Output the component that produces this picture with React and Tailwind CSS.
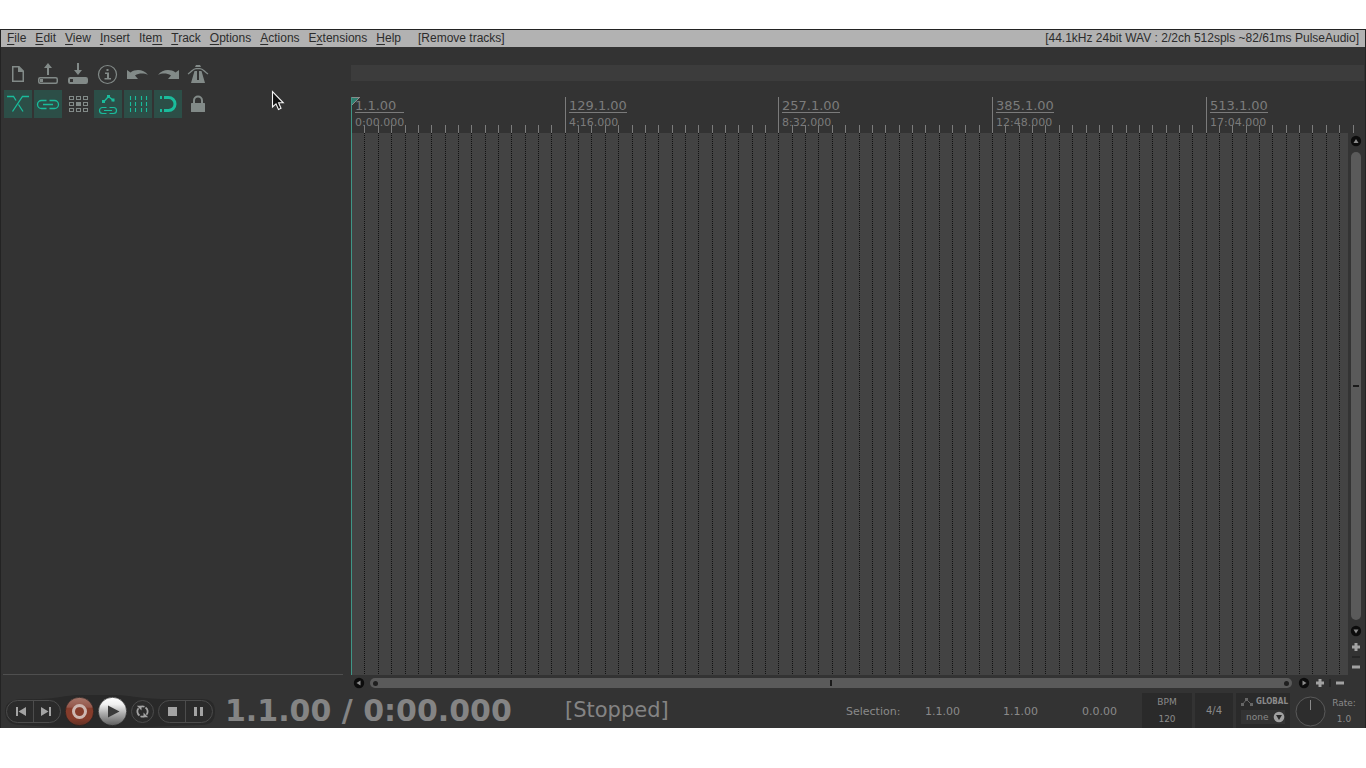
import React from "react";

const BEAT = 13.352;
const beatX = (i) => Math.round(i * BEAT + 0.14);
const ticks = Array.from({ length: 200 }, (_, i) => beatX(i) + 0.5);
const gridPath = ticks.slice(1).map((x) => `M${x} 0V2000`).join("");
const minorPath = ticks.filter((_, i) => i % 16 !== 0).map((x) => `M${x} 28V36`).join("");

const markers = [
  { bar: "1.1.00", time: "0:00.000", beat: 0 },
  { bar: "129.1.00", time: "4:16.000", beat: 16 },
  { bar: "257.1.00", time: "8:32.000", beat: 32 },
  { bar: "385.1.00", time: "12:48.000", beat: 48 },
  { bar: "513.1.00", time: "17:04.000", beat: 64 },
];

const menus = [
  ["", "F", "ile"],
  ["", "E", "dit"],
  ["", "V", "iew"],
  ["", "I", "nsert"],
  ["Ite", "m", ""],
  ["", "T", "rack"],
  ["", "O", "ptions"],
  ["", "A", "ctions"],
  ["E", "x", "tensions"],
  ["", "H", "elp"],
];

const Drive = ({ filled }) => (
  <>
    <rect x="4.75" y="17.75" width="18.5" height="5.5" rx="1.5" fill={filled ? "currentColor" : "none"} stroke="currentColor" strokeWidth="1.5" />
    <rect x="6" y="19" width="3" height="3" fill={filled ? "#333333" : "currentColor"} />
  </>
);

const topTools = [
  {
    name: "New project",
    art: (
      <>
        <path d="M8.75 6.75H15L19.25 11V21.25H8.75Z" fill="none" stroke="currentColor" strokeWidth="1.5" />
        <path d="M14 6V12H20L14 6Z" fill="currentColor" />
      </>
    ),
  },
  {
    name: "Open project",
    art: (
      <>
        <path d="M14 3L18 8H15V15H13V8H10Z" fill="currentColor" />
        <Drive />
      </>
    ),
  },
  {
    name: "Save project",
    art: (
      <>
        <path d="M13 3H15V10H18L14 15L10 10H13Z" fill="currentColor" />
        <Drive filled />
      </>
    ),
  },
  {
    name: "Project settings",
    art: (
      <>
        <circle cx="13.5" cy="14.5" r="9" fill="none" stroke="currentColor" strokeWidth="1.2" />
        <path d="M12.5 9H14.5V11H12.5ZM11 12.5H15V18H17V19.5H10.5V18H13V14H11Z" fill="currentColor" />
      </>
    ),
  },
  {
    name: "Undo",
    art: <path d="M3 10L6.5 12.5C12 8.5 20 9.5 24 15C20 13 15 13 11 15.5L14 19H3Z" fill="currentColor" />,
  },
  {
    name: "Redo",
    art: <path d="M25 10L21.5 12.5C16 8.5 8 9.5 4 15C8 13 13 13 17 15.5L14 19H25Z" fill="currentColor" />,
  },
  {
    name: "Metronome",
    art: (
      <>
        <path d="M12 5H16L17 7H11Z" fill="currentColor" />
        <path d="M4 14C8 11.5 9 8.7 12 8.7H16C19 8.7 20 11.5 24 14" fill="none" stroke="currentColor" strokeWidth="1.3" />
        <path d="M10.5 11H13V20H15V11H17.5L21 23H7Z" fill="currentColor" />
      </>
    ),
  },
];

const bottomTools = [
  {
    name: "Auto-crossfade",
    on: true,
    art: <path d="M3 6.5H9.5L12 10.5M14.5 14.5L19 21.5M25 6.5H18.5L8.5 21.5" fill="none" stroke="currentColor" strokeWidth="1.3" />,
  },
  {
    name: "Item grouping",
    on: true,
    art: <path d="M12.5 10.5H7.5A4 4 0 0 0 7.5 18.5H12.5M15.5 10.5H20.5A4 4 0 0 1 20.5 18.5H15.5M9 14.5H19" fill="none" stroke="currentColor" strokeWidth="1.3" />,
  },
  {
    name: "Ripple editing",
    art: (
      <>
        {[0, 1, 2].map((r) =>
          [0, 1, 2].map((c) => (
            <rect
              key={`${r}${c}`}
              x={5.5 + c * 7}
              y={6.5 + r * 6}
              width="4"
              height="3"
              fill={r === 1 && c === 1 ? "currentColor" : "none"}
              stroke="currentColor"
            />
          ))
        )}
      </>
    ),
  },
  {
    name: "Move envelopes with items",
    on: true,
    art: (
      <>
        <path d="M10 11.5L14.5 6.5L20 11" fill="none" stroke="currentColor" strokeWidth="1.3" />
        <path d="M8 10H11V13H8ZM13 5H16V8H13ZM17.5 8.5H20.5V11.5H17.5Z" fill="currentColor" />
        <path d="M12.5 17.5H8.5A3 3 0 0 0 8.5 23.5H12.5M15.5 17.5H19.5A3 3 0 0 1 19.5 23.5H15.5M10 20.5H18" fill="none" stroke="currentColor" strokeWidth="1.2" />
      </>
    ),
  },
  {
    name: "Grid lines",
    on: true,
    art: <path d="M6.5 6V22M11.5 6V22M17.5 6V22M22.5 6V22" fill="none" stroke="currentColor" strokeWidth="1.1" strokeDasharray="4 2" />,
  },
  {
    name: "Snapping",
    on: true,
    art: (
      <>
        <path d="M6 6H8V9H6ZM6 19H8V22H6Z" fill="currentColor" />
        <path d="M10 7.5H14.5A6.5 6.5 0 0 1 14.5 20.5H10" fill="none" stroke="currentColor" strokeWidth="3" />
      </>
    ),
  },
  {
    name: "Locking",
    art: (
      <>
        <rect x="7" y="13" width="14" height="9" rx="0.5" fill="currentColor" />
        <path d="M10 13.5V10.5A4 4 0 0 1 18 10.5V13.5" fill="none" stroke="currentColor" strokeWidth="2" />
      </>
    ),
  },
];

function ToolRow({ tools }) {
  return (
    <div className="flex gap-[2px]">
      {tools.map((t) => (
        <button
          key={t.name}
          aria-label={t.name}
          aria-pressed={t.on ? true : undefined}
          className={t.on ? "size-7 bg-[#2c4e47] text-[#1abc9c]" : "size-7 text-[#828a88]"}
        >
          <svg viewBox="0 0 28 28" className="block size-7">{t.art}</svg>
        </button>
      ))}
    </div>
  );
}

const arrows = {
  up: "M8 6L10.5 10H5.5Z",
  down: "M8 10.5L10.5 6.5H5.5Z",
  left: "M5.5 8L9.5 5.5V10.5Z",
  right: "M10.5 8L6.5 5.5V10.5Z",
};

function ArrowButton({ dir }) {
  return (
    <button aria-label={`Scroll ${dir}`} className="size-4 shrink-0">
      <svg viewBox="0 0 16 16" className="block size-4">
        <circle cx="8" cy="8" r="5.2" fill="#0c0c0c" />
        <path d={arrows[dir]} fill="#8c8c8c" />
      </svg>
    </button>
  );
}

function ZoomButton({ label, plus }) {
  return (
    <button aria-label={label} className="size-4 shrink-0">
      <svg viewBox="0 0 16 16" className="block size-4">
        <path d={plus ? "M6.5 4H9.5V6.5H12V9.5H9.5V12H6.5V9.5H4V6.5H6.5Z" : "M4 6.5H12V9.5H4Z"} fill="#a2a2a2" />
      </svg>
    </button>
  );
}

function PillPair({ items, className }) {
  return (
    <div className={`flex h-[23px] w-[55px] shrink-0 overflow-hidden rounded-full border border-[#4c4c4c] bg-[#2b2b2b] ${className}`}>
      {items.map((it, i) => (
        <button key={it.name} aria-label={it.name} className={i === 0 ? "w-[27px] shrink-0 border-r border-[#4c4c4c]" : "w-[26px] shrink-0"}>
          <svg viewBox="0 0 26 21" className="block h-[21px] w-[26px]" fill="#a3a3a3">
            <path d={it.d} />
          </svg>
        </button>
      ))}
    </div>
  );
}

const field = "bg-transparent p-0 outline-none";

function Transport() {
  return (
    <div className="flex h-[37px] shrink-0 items-center pt-1 font-['DejaVu_Sans',sans-serif] text-[#8a8a8a]">
      <div className="relative flex shrink-0 items-center pl-[5px]">
        <svg viewBox="0 0 214 33" className="absolute left-0 top-[-2px] h-[33px] w-[214px]">
          <path d="M4 16C4 7 12 4 24 4C55 5 62 0 79 0H112C128 0 135 3 160 4H200C210 4 214 8 214 16C214 26 210 30 200 30C160 31 130 33 96 33C62 33 40 31 20 30C10 30 4 26 4 16Z" fill="#292929" />
        </svg>
        <PillPair
          className="relative"
          items={[
            { name: "Go to start", d: "M9 6H11V15H9ZM19 6V15L11.5 10.5Z" },
            { name: "Go to end", d: "M15 6H17V15H15ZM7 6V15L14.5 10.5Z" },
          ]}
        />
        <button aria-label="Record" className="relative ml-1 size-[29px] shrink-0">
          <svg viewBox="0 0 29 29" className="block size-[29px]">
            <defs>
              <linearGradient id="rec" x1="0" y1="0" x2="0" y2="1">
                <stop offset="0" stopColor="#a5766a" />
                <stop offset="0.35" stopColor="#94564a" />
                <stop offset="0.38" stopColor="#853c2b" />
                <stop offset="0.75" stopColor="#853c2b" />
                <stop offset="1" stopColor="#5f3025" />
              </linearGradient>
            </defs>
            <circle cx="14.5" cy="14.5" r="14.2" fill="url(#rec)" stroke="#1c1c1c" strokeWidth="0.6" />
            <circle cx="14.5" cy="14.5" r="6" fill="none" stroke="#cdb7b1" strokeWidth="3" />
          </svg>
        </button>
        <button aria-label="Play" className="relative ml-1 size-[29px] shrink-0">
          <svg viewBox="0 0 29 29" className="block size-[29px]">
            <defs>
              <linearGradient id="play" x1="0" y1="0" x2="0" y2="1">
                <stop offset="0" stopColor="#ffffff" />
                <stop offset="0.25" stopColor="#f0f0f0" />
                <stop offset="0.55" stopColor="#b0b0b0" />
                <stop offset="1" stopColor="#5c5c5c" />
              </linearGradient>
            </defs>
            <circle cx="14.5" cy="14.5" r="14.2" fill="url(#play)" stroke="#1c1c1c" strokeWidth="0.6" />
            <path d="M10 8.5V20.5L21.5 14.5Z" fill="#3a3a3a" />
          </svg>
        </button>
        <button aria-label="Repeat" className="relative ml-1 size-[23px] shrink-0">
          <svg viewBox="0 0 23 23" className="block size-[23px]">
            <circle cx="11.5" cy="11.5" r="11" fill="#2b2b2b" stroke="#4c4c4c" />
            <path d="M8.5 15.6A5 5 0 0 1 7.5 8.3M14.5 7.4A5 5 0 0 1 15.5 14.7M9.5 6.8A5 5 0 0 1 13.5 6.8M9.5 16.2A5 5 0 0 0 13.5 16.2" fill="none" stroke="#a3a3a3" strokeWidth="1.8" />
            <path d="M5.8 5.8H10.5V10.5ZM17.2 17.2H12.5V12.5Z" fill="#a3a3a3" />
          </svg>
        </button>
        <PillPair
          className="relative ml-1"
          items={[
            { name: "Stop", d: "M9 6H18V15H9Z" },
            { name: "Pause", d: "M8 6H11V15H8ZM14 6H17V15H14Z" },
          ]}
        />
      </div>
      <div className="ml-3 w-[340px] shrink-0 whitespace-nowrap pb-[2px] text-[30px] font-bold leading-8 text-[#848484]">1.1.00 / 0:00.000</div>
      <div className="whitespace-nowrap pb-1 text-[21px] leading-8 text-[#848484]">[Stopped]</div>

      <div className="ml-auto flex shrink-0 items-center text-[11px] leading-4">
        <label htmlFor="sel-start" className="w-[79px]">Selection:</label>
        <input id="sel-start" defaultValue="1.1.00" className={`w-[78px] ${field}`} />
        <input aria-label="Selection end" defaultValue="1.1.00" className={`w-[79px] ${field}`} />
        <input aria-label="Selection length" defaultValue="0.0.00" className={`w-[60px] ${field}`} />
      </div>

      <div className="flex h-[35px] shrink-0 self-end text-[9px] leading-[18px]">
        <div className="flex w-[50px] flex-col bg-[#2a2a2a] text-center">
          <label htmlFor="bpm">BPM</label>
          <input id="bpm" defaultValue="120" className={`h-4 w-full text-center ${field}`} />
        </div>
        <button className="ml-[3px] w-[38px] bg-[#2a2a2a] text-[10px]">4/4</button>
        <div className="ml-[3px] w-[54px] bg-[#2a2a2a] pl-[5px]">
          <label htmlFor="global-auto" className="flex h-[17px] items-center gap-[3px] font-['DejaVu_Sans_Condensed','DejaVu_Sans',sans-serif] text-[8px] font-bold">
            <svg viewBox="0 0 12 10" className="h-[10px] w-3 shrink-0">
              <path d="M1.5 7.5L5.5 2.5L10.5 7.5" fill="none" stroke="#666666" />
              <path d="M0 6H3V9H0ZM4 1H7V4H4ZM9 6H12V9H9Z" fill="#666666" />
            </svg>
            GLOBAL
          </label>
          <div className="relative flex h-[14px] w-[44px] items-center bg-[#333333]">
            <select id="global-auto" className="h-[14px] w-full appearance-none bg-transparent pl-[5px] leading-[14px] outline-none">
              <option>none</option>
            </select>
            <svg viewBox="0 0 12 12" className="pointer-events-none absolute right-0 size-3">
              <circle cx="6" cy="6" r="5.3" fill="#a0a0a0" />
              <path d="M3 4H9L6 9Z" fill="#2a2a2a" />
            </svg>
          </div>
        </div>
        <div className="relative ml-[5px] mt-[3px] size-[31px]">
          <svg viewBox="0 0 31 31" className="block size-[31px]">
            <circle cx="15.5" cy="15.5" r="14.5" fill="#2d2d2d" stroke="#5a5a5a" />
            <path d="M15.5 4V14" stroke="#8a8a8a" strokeWidth="1" />
          </svg>
          <input type="range" aria-label="Playback rate" min="0.25" max="4" step="0.01" defaultValue="1" className="absolute inset-0 m-0 size-full opacity-0" />
        </div>
        <div className="ml-px w-[38px] pr-1 pt-[2px] text-center leading-4">
          <div>Rate:</div>
          <div>1.0</div>
        </div>
      </div>
    </div>
  );
}

export default function App() {
  return (
    <div className="flex h-screen flex-col bg-white pb-10 pt-[29px]">
      <div className="relative flex min-h-0 flex-1 flex-col overflow-hidden border border-b-0 border-[#232323] bg-[#333333]">
        <nav className="flex h-[17px] shrink-0 items-center gap-px bg-[#b2b2b2] pl-[2px] pr-1.5 font-['Liberation_Sans',sans-serif] text-[12px] leading-[17px] text-[#2c2c2c]">
          {menus.map(([a, u, b]) => (
            <button key={a + u + b} className="whitespace-nowrap px-1">
              {a}
              <span className="underline underline-offset-2">{u}</span>
              {b}
            </button>
          ))}
          <button className="ml-2 whitespace-nowrap px-1">[Remove tracks]</button>
          <span className="ml-auto whitespace-nowrap">[44.1kHz 24bit WAV : 2/2ch 512spls ~82/61ms PulseAudio]</span>
        </nav>

        <div className="flex min-h-0 flex-1">
          <aside className="flex w-[350px] shrink-0 flex-col">
            <div className="flex flex-col gap-[2px] pl-[3px] pt-[13px]">
              <ToolRow tools={topTools} />
              <ToolRow tools={bottomTools} />
            </div>
            <div className="mb-4 ml-[2px] mr-2 mt-auto h-px bg-[#4f4f4f]" />
          </aside>

          <main className="flex min-w-0 flex-1 flex-col">
            <div className="mr-px mt-[18px] h-4 shrink-0 bg-[#3c3c3c]" />
            <div className="relative mt-4 h-9 shrink-0 overflow-hidden font-['DejaVu_Sans',sans-serif] text-[#7b7b7b]">
              <svg className="absolute inset-0 size-full">
                <path d={minorPath} stroke="#7b7b7b" />
                <path d="M0 0.5H9" stroke="#8a8a8a" />
                <path d="M0 1H8L0 9Z" fill="#2f7f70" />
                <path d="M8.5 0.5L0.5 8.5" stroke="#8a8a8a" />
                <path d="M0.5 0V37" stroke="#3f9586" />
              </svg>
              {markers.map((m) => (
                <div
                  key={m.bar}
                  className={m.beat ? "absolute inset-y-0 border-l border-[#7b7b7b] pl-[3px]" : "absolute inset-y-0 pl-1"}
                  style={{ left: beatX(m.beat) }}
                >
                  <div className="flex h-4 items-end border-b border-[#7b7b7b] text-[13px] leading-[13px]">{m.bar}</div>
                  <div className="text-[11px] leading-5">{m.time}</div>
                </div>
              ))}
            </div>

            <div className="flex min-h-0 flex-1">
              <div className="relative min-w-0 flex-1 overflow-hidden border-l border-[#3f9586] bg-[#434343]">
                <svg className="absolute inset-y-0 -left-px h-full w-full">
                  <path d={gridPath} stroke="#111111" strokeDasharray="1 1" />
                </svg>
              </div>
              <div className="mr-px flex w-4 shrink-0 flex-col items-center">
                <ArrowButton dir="up" />
                <div role="scrollbar" aria-label="Vertical scroll" aria-orientation="vertical" aria-controls="root" aria-valuenow={50} className="my-[3px] flex w-[10px] flex-1 items-center rounded-full bg-[#5a5a5a]">
                  <div className="mx-[2px] h-[2px] flex-1 bg-[#1a1a1a]" />
                </div>
                <ArrowButton dir="down" />
                <ZoomButton label="Zoom in vertically" plus />
                <div className="my-px h-[2px] w-2 bg-[#262626]" />
                <ZoomButton label="Zoom out vertically" />
              </div>
            </div>

            <div className="flex h-4 shrink-0 items-center pr-[17px]">
              <ArrowButton dir="left" />
              <div role="scrollbar" aria-label="Horizontal scroll" aria-orientation="horizontal" aria-controls="root" aria-valuenow={50} className="ml-[3px] mr-1 flex h-[10px] flex-1 items-center justify-between rounded-full bg-[#5a5a5a] px-[3px]">
                <span className="size-[5px] rounded-full bg-[#1f1f1f]" />
                <span className="h-[6px] w-[2px] bg-[#1a1a1a]" />
                <span className="size-[5px] rounded-full bg-[#1f1f1f]" />
              </div>
              <ArrowButton dir="right" />
              <ZoomButton label="Zoom in horizontally" plus />
              <div className="mx-px h-2 w-[2px] bg-[#262626]" />
              <ZoomButton label="Zoom out horizontally" />
            </div>
          </main>
        </div>

        <Transport />

        <svg viewBox="0 0 14 22" className="pointer-events-none absolute left-[270px] top-[60px] h-[22px] w-[14px]">
          <path d="M1.5 1.5V17L5 13.8L7.5 19.5L10 18.3L7.6 12.8H12.3Z" fill="#111111" stroke="#f5f5f5" strokeWidth="1.1" />
        </svg>
      </div>
    </div>
  );
}
